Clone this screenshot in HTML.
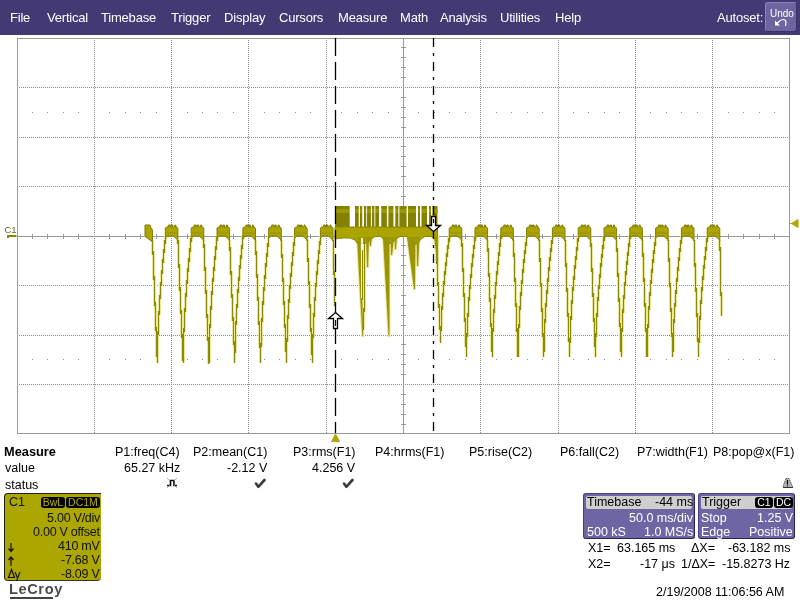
<!DOCTYPE html>
<html><head><meta charset="utf-8">
<style>
*{margin:0;padding:0;box-sizing:border-box}
html,body{width:800px;height:600px;overflow:hidden;background:#fff;font-family:"Liberation Sans",sans-serif;position:relative}
.t,#menu span,#undo div,.badge{will-change:transform}
.a{position:absolute;white-space:nowrap}
#menu{position:absolute;left:0;top:0;width:800px;height:35px;background:#433a74}
#menu span{position:absolute;top:10px;color:#fff;font-size:13px;line-height:15px;letter-spacing:-0.2px}
#undo{position:absolute;left:765px;top:2px;width:32px;height:30px;background:#6e65a0;border-radius:3px;color:#fff;border-top:1px solid #8a80c0;border-left:1px solid #8a80c0;border-right:1px solid #3a3068;border-bottom:1px solid #3a3068}
.t{position:absolute;white-space:nowrap;font-size:12px;line-height:14px;color:#000}
.r{text-align:right}
.ms{font-size:12.5px}
#c1{position:absolute;left:4px;top:493px;width:97px;height:88px;background:#aca600;border-top:1px solid #222;border-left:1px solid #222;border-bottom:1px solid #333;border-radius:4px 0 4px 4px}
.c1t{font-size:12.5px;color:#111 !important;letter-spacing:-0.25px}
.panel{position:absolute;top:493px;height:46px;background:#6e66a4;border:1px solid #463e80;border-right-color:#2a2258;border-bottom-color:#2a2258;border-radius:3px}
.hdr{position:absolute;left:2px;top:2px;height:13px;background:#cfcfcf;border-radius:2px}
.panel .t{color:#fff;font-size:12.5px}
.badge{position:absolute;background:#000;border-radius:3px;font-size:10.5px;line-height:11.5px;text-align:center;overflow:hidden}
</style></head><body>
<div id="menu">
<span style="left:10px">File</span>
<span style="left:47px">Vertical</span>
<span style="left:101px">Timebase</span>
<span style="left:171px">Trigger</span>
<span style="left:224px">Display</span>
<span style="left:279px">Cursors</span>
<span style="left:338px">Measure</span>
<span style="left:400px">Math</span>
<span style="left:440px">Analysis</span>
<span style="left:500px">Utilities</span>
<span style="left:555px">Help</span>
<span style="left:717px">Autoset:</span>
<div id="undo"><div style="position:absolute;left:4px;top:5px;font-size:10px;line-height:11px">Undo</div>
<svg style="position:absolute;left:-1px;top:-1px" width="32" height="30" viewBox="765 2 32 30"><path d="M775,20.5 L775,25.5 L780,25.5 Z" fill="#fff"/><path d="M776,24.5 L778.5,22 Q781,19.5 783,19.5 Q786,19.5 786,22.5 L785.5,26" stroke="#fff" stroke-width="1.2" fill="none"/></svg></div>
</div>
<svg class="a" style="left:0;top:0" width="800" height="600" viewBox="0 0 800 600" shape-rendering="crispEdges">
<path d="M94.5,40V433M171.5,40V433M248.5,40V433M326.5,40V433M480.5,40V433M558.5,40V433M635.5,40V433M712.5,40V433M19,87.5H789M19,137.5H789M19,186.5H789M19,285.5H789M19,335.5H789M19,384.5H789" stroke="#8c8c8c" stroke-width="1" stroke-dasharray="1 1" fill="none"/>
<path d="M32,112h1v1h-1zM47,112h1v1h-1zM63,112h1v1h-1zM78,112h1v1h-1zM109,112h1v1h-1zM125,112h1v1h-1zM140,112h1v1h-1zM156,112h1v1h-1zM187,112h1v1h-1zM202,112h1v1h-1zM217,112h1v1h-1zM233,112h1v1h-1zM264,112h1v1h-1zM279,112h1v1h-1zM295,112h1v1h-1zM310,112h1v1h-1zM341,112h1v1h-1zM357,112h1v1h-1zM372,112h1v1h-1zM388,112h1v1h-1zM418,112h1v1h-1zM434,112h1v1h-1zM449,112h1v1h-1zM465,112h1v1h-1zM496,112h1v1h-1zM511,112h1v1h-1zM527,112h1v1h-1zM542,112h1v1h-1zM573,112h1v1h-1zM588,112h1v1h-1zM604,112h1v1h-1zM619,112h1v1h-1zM650,112h1v1h-1zM666,112h1v1h-1zM681,112h1v1h-1zM697,112h1v1h-1zM728,112h1v1h-1zM743,112h1v1h-1zM759,112h1v1h-1zM774,112h1v1h-1zM32,359h1v1h-1zM47,359h1v1h-1zM63,359h1v1h-1zM78,359h1v1h-1zM109,359h1v1h-1zM125,359h1v1h-1zM140,359h1v1h-1zM156,359h1v1h-1zM187,359h1v1h-1zM202,359h1v1h-1zM217,359h1v1h-1zM233,359h1v1h-1zM264,359h1v1h-1zM279,359h1v1h-1zM295,359h1v1h-1zM310,359h1v1h-1zM341,359h1v1h-1zM357,359h1v1h-1zM372,359h1v1h-1zM388,359h1v1h-1zM418,359h1v1h-1zM434,359h1v1h-1zM449,359h1v1h-1zM465,359h1v1h-1zM496,359h1v1h-1zM511,359h1v1h-1zM527,359h1v1h-1zM542,359h1v1h-1zM573,359h1v1h-1zM588,359h1v1h-1zM604,359h1v1h-1zM619,359h1v1h-1zM650,359h1v1h-1zM666,359h1v1h-1zM681,359h1v1h-1zM697,359h1v1h-1zM728,359h1v1h-1zM743,359h1v1h-1zM759,359h1v1h-1zM774,359h1v1h-1z" fill="#8c8c8c"/>
<rect x="17.5" y="38.5" width="772" height="395" fill="none" stroke="#999"/>
<rect x="17" y="236" width="772" height="1" fill="#999"/>
<rect x="403" y="38" width="1" height="395" fill="#999"/>
<path d="M32,234h1v5h-1zM47,234h1v5h-1zM63,234h1v5h-1zM78,234h1v5h-1zM109,234h1v5h-1zM125,234h1v5h-1zM140,234h1v5h-1zM156,234h1v5h-1zM187,234h1v5h-1zM202,234h1v5h-1zM217,234h1v5h-1zM233,234h1v5h-1zM264,234h1v5h-1zM279,234h1v5h-1zM295,234h1v5h-1zM310,234h1v5h-1zM341,234h1v5h-1zM357,234h1v5h-1zM372,234h1v5h-1zM388,234h1v5h-1zM418,234h1v5h-1zM434,234h1v5h-1zM449,234h1v5h-1zM465,234h1v5h-1zM496,234h1v5h-1zM511,234h1v5h-1zM527,234h1v5h-1zM542,234h1v5h-1zM573,234h1v5h-1zM588,234h1v5h-1zM604,234h1v5h-1zM619,234h1v5h-1zM650,234h1v5h-1zM666,234h1v5h-1zM681,234h1v5h-1zM697,234h1v5h-1zM728,234h1v5h-1zM743,234h1v5h-1zM759,234h1v5h-1zM774,234h1v5h-1zM401,47h5v1h-5zM401,57h5v1h-5zM401,67h5v1h-5zM401,77h5v1h-5zM401,97h5v1h-5zM401,107h5v1h-5zM401,117h5v1h-5zM401,127h5v1h-5zM401,146h5v1h-5zM401,156h5v1h-5zM401,166h5v1h-5zM401,176h5v1h-5zM401,196h5v1h-5zM401,206h5v1h-5zM401,216h5v1h-5zM401,226h5v1h-5zM401,245h5v1h-5zM401,255h5v1h-5zM401,265h5v1h-5zM401,275h5v1h-5zM401,295h5v1h-5zM401,305h5v1h-5zM401,315h5v1h-5zM401,325h5v1h-5zM401,344h5v1h-5zM401,354h5v1h-5zM401,364h5v1h-5zM401,374h5v1h-5zM401,394h5v1h-5zM401,404h5v1h-5zM401,414h5v1h-5zM401,424h5v1h-5z" fill="#999"/>
</svg>
<svg class="a" style="left:0;top:0" width="800" height="600" viewBox="0 0 800 600">
<path d="M151,240h3v15h-3zM152,251h3v29h-3zM153,276h3v30h-3zM154,302h3v29h-3zM155,327h3v30h-3zM156,353h3v10h-3zM156,349h3v14h-3zM156,337h3v13h-3zM157,324h3v11h-3zM156,331h3v7h-3zM158,311h3v4h-3zM157,311h3v14h-3zM158,299h3v13h-3zM159,286h3v13h-3zM158,295h3v5h-3zM160,273h3v13h-3zM159,282h3v5h-3zM161,261h3v13h-3zM160,270h3v4h-3zM163,248h3v5h-3zM162,249h3v14h-3zM161,259h3v3h-3zM164,236h3v8h-3zM163,240h3v9h-3z" fill="#ebe79a"/>
<path d="M176,240h3v4h-3zM177,240h3v28h-3zM178,264h3v27h-3zM179,287h3v27h-3zM180,310h3v28h-3zM181,334h3v27h-3zM182,357h3v6h-3zM182,349h3v14h-3zM182,337h3v13h-3zM183,324h3v8h-3zM182,328h3v10h-3zM183,311h3v14h-3zM184,299h3v13h-3zM183,308h3v4h-3zM185,286h3v11h-3zM184,293h3v7h-3zM186,273h3v11h-3zM185,280h3v7h-3zM187,261h3v11h-3zM186,268h3v6h-3zM189,248h3v4h-3zM188,248h3v14h-3zM187,258h3v4h-3zM190,236h3v6h-3zM189,238h3v11h-3z" fill="#ebe79a"/>
<path d="M202,240h3v8h-3zM203,244h3v27h-3zM204,267h3v27h-3zM205,290h3v28h-3zM206,314h3v27h-3zM207,337h3v27h-3zM208,360h3v3h-3zM208,349h3v14h-3zM208,337h3v13h-3zM209,324h3v4h-3zM208,324h3v14h-3zM209,311h3v14h-3zM210,299h3v11h-3zM209,306h3v6h-3zM211,286h3v9h-3zM210,291h3v9h-3zM212,273h3v9h-3zM211,278h3v9h-3zM213,261h3v10h-3zM212,267h3v7h-3zM214,248h3v12h-3zM213,256h3v6h-3zM216,236h3v5h-3zM215,237h3v13h-3zM214,246h3v3h-3z" fill="#ebe79a"/>
<path d="M228,240h3v11h-3zM229,247h3v28h-3zM230,271h3v27h-3zM231,294h3v27h-3zM232,317h3v28h-3zM233,341h3v22h-3zM234,349h3v4h-3zM233,349h3v14h-3zM234,337h3v13h-3zM234,324h3v14h-3zM235,311h3v14h-3zM234,321h3v4h-3zM236,299h3v9h-3zM235,304h3v8h-3zM237,286h3v7h-3zM236,289h3v11h-3zM238,273h3v8h-3zM237,277h3v10h-3zM239,261h3v8h-3zM238,265h3v9h-3zM240,248h3v11h-3zM239,255h3v7h-3zM242,236h3v3h-3zM241,235h3v14h-3zM240,245h3v4h-3z" fill="#ebe79a"/>
<path d="M254,240h3v15h-3zM255,251h3v27h-3zM256,274h3v27h-3zM257,297h3v28h-3zM258,321h3v27h-3zM259,344h3v19h-3zM259,349h3v14h-3zM260,337h3v10h-3zM259,343h3v7h-3zM260,324h3v14h-3zM261,311h3v11h-3zM260,318h3v7h-3zM262,299h3v6h-3zM261,301h3v11h-3zM263,286h3v5h-3zM262,287h3v13h-3zM264,273h3v6h-3zM263,275h3v12h-3zM265,261h3v6h-3zM264,263h3v11h-3zM266,248h3v9h-3zM265,253h3v9h-3zM267,236h3v11h-3zM266,243h3v6h-3z" fill="#ebe79a"/>
<path d="M280,240h3v18h-3zM281,254h3v28h-3zM282,278h3v27h-3zM283,301h3v27h-3zM284,324h3v28h-3zM285,348h3v15h-3zM285,349h3v14h-3zM286,337h3v5h-3zM285,338h3v12h-3zM286,324h3v14h-3zM287,311h3v8h-3zM286,315h3v10h-3zM288,299h3v4h-3zM287,299h3v13h-3zM289,286h3v3h-3zM288,285h3v15h-3zM290,273h3v4h-3zM289,273h3v14h-3zM291,261h3v5h-3zM290,262h3v12h-3zM292,248h3v8h-3zM291,252h3v10h-3zM293,236h3v10h-3zM292,242h3v7h-3z" fill="#ebe79a"/>
<path d="M306,240h3v22h-3zM307,258h3v27h-3zM308,281h3v27h-3zM309,304h3v28h-3zM310,328h3v27h-3zM311,351h3v12h-3zM311,349h3v14h-3zM311,337h3v13h-3zM312,324h3v14h-3zM311,334h3v4h-3zM313,311h3v6h-3zM312,313h3v12h-3zM313,299h3v13h-3zM314,286h3v15h-3zM313,297h3v3h-3zM315,273h3v14h-3zM314,283h3v4h-3zM317,261h3v3h-3zM316,260h3v15h-3zM315,271h3v3h-3zM318,248h3v6h-3zM317,250h3v12h-3zM319,236h3v9h-3zM318,241h3v8h-3z" fill="#ebe79a"/>
<path d="M332,240h3v35h-3zM333,271h3v35h-3z" fill="#ebe79a"/>
<path d="M435,240h3v24h-3zM436,260h3v26h-3zM437,282h3v26h-3zM438,304h3v26h-3zM439,326h3v17h-3zM439,332h3v11h-3zM440,321h3v10h-3zM439,327h3v6h-3zM440,310h3v12h-3zM441,300h3v10h-3zM440,306h3v5h-3zM442,289h3v8h-3zM441,293h3v8h-3zM443,278h3v7h-3zM442,281h3v9h-3zM444,268h3v7h-3zM443,271h3v8h-3zM445,257h3v9h-3zM444,262h3v7h-3zM447,246h3v3h-3zM446,245h3v12h-3zM445,253h3v5h-3zM448,236h3v6h-3zM447,238h3v9h-3z" fill="#ebe79a"/>
<path d="M460,240h3v7h-3zM461,243h3v29h-3zM462,268h3v29h-3zM463,293h3v29h-3zM464,318h3v29h-3zM465,343h3v14h-3zM465,344h3v13h-3zM466,332h3v5h-3zM465,333h3v12h-3zM466,320h3v13h-3zM467,308h3v9h-3zM466,313h3v8h-3zM468,296h3v5h-3zM467,297h3v12h-3zM469,284h3v5h-3zM468,285h3v12h-3zM470,272h3v6h-3zM469,274h3v11h-3zM471,260h3v7h-3zM470,263h3v10h-3zM472,248h3v10h-3zM471,254h3v7h-3zM474,236h3v5h-3zM473,237h3v12h-3zM472,245h3v4h-3z" fill="#ebe79a"/>
<path d="M486,240h3v12h-3zM487,248h3v29h-3zM488,273h3v29h-3zM489,298h3v29h-3zM490,323h3v29h-3zM491,348h3v9h-3zM491,344h3v13h-3zM491,332h3v13h-3zM492,320h3v12h-3zM491,328h3v5h-3zM493,308h3v5h-3zM492,309h3v12h-3zM494,296h3v3h-3zM493,295h3v14h-3zM494,284h3v13h-3zM496,272h3v3h-3zM495,271h3v15h-3zM494,282h3v3h-3zM497,260h3v5h-3zM496,261h3v12h-3zM498,248h3v8h-3zM497,252h3v9h-3zM500,236h3v3h-3zM499,235h3v12h-3zM498,243h3v6h-3z" fill="#ebe79a"/>
<path d="M512,240h3v17h-3zM513,253h3v29h-3zM514,278h3v29h-3zM515,303h3v29h-3zM516,328h3v29h-3zM517,353h3v4h-3zM517,344h3v13h-3zM517,332h3v13h-3zM518,320h3v8h-3zM517,324h3v9h-3zM518,308h3v13h-3zM519,296h3v14h-3zM518,306h3v3h-3zM520,284h3v12h-3zM519,292h3v5h-3zM521,272h3v12h-3zM520,280h3v5h-3zM523,260h3v3h-3zM522,259h3v14h-3zM521,269h3v4h-3zM524,248h3v6h-3zM523,250h3v11h-3zM525,236h3v10h-3zM524,242h3v7h-3z" fill="#ebe79a"/>
<path d="M538,240h3v22h-3zM539,258h3v29h-3zM540,283h3v29h-3zM541,308h3v29h-3zM542,333h3v24h-3zM543,344h3v8h-3zM542,348h3v9h-3zM543,332h3v13h-3zM544,320h3v3h-3zM543,319h3v14h-3zM544,308h3v13h-3zM545,296h3v11h-3zM544,303h3v6h-3zM546,284h3v10h-3zM545,290h3v7h-3zM547,272h3v10h-3zM546,278h3v7h-3zM548,260h3v11h-3zM547,267h3v6h-3zM550,248h3v4h-3zM549,248h3v13h-3zM548,257h3v4h-3zM551,236h3v8h-3zM550,240h3v9h-3z" fill="#ebe79a"/>
<path d="M564,240h3v27h-3zM565,263h3v29h-3zM566,288h3v29h-3zM567,313h3v29h-3zM568,338h3v19h-3zM568,344h3v13h-3zM569,332h3v11h-3zM568,339h3v6h-3zM569,320h3v13h-3zM570,308h3v12h-3zM569,316h3v5h-3zM571,296h3v8h-3zM570,300h3v9h-3zM572,284h3v7h-3zM571,287h3v10h-3zM573,272h3v8h-3zM572,276h3v9h-3zM574,260h3v9h-3zM573,265h3v8h-3zM576,248h3v3h-3zM575,247h3v13h-3zM574,256h3v5h-3zM577,236h3v6h-3zM576,238h3v11h-3z" fill="#ebe79a"/>
<path d="M589,240h3v7h-3zM590,243h3v29h-3zM591,268h3v29h-3zM592,293h3v29h-3zM593,318h3v29h-3zM594,343h3v14h-3zM594,344h3v13h-3zM595,332h3v5h-3zM594,333h3v12h-3zM595,320h3v13h-3zM596,308h3v9h-3zM595,313h3v8h-3zM597,296h3v5h-3zM596,297h3v12h-3zM598,284h3v5h-3zM597,285h3v12h-3zM599,272h3v6h-3zM598,274h3v11h-3zM600,260h3v7h-3zM599,263h3v10h-3zM601,248h3v10h-3zM600,254h3v7h-3zM603,236h3v5h-3zM602,237h3v12h-3zM601,245h3v4h-3z" fill="#ebe79a"/>
<path d="M615,240h3v12h-3zM616,248h3v29h-3zM617,273h3v29h-3zM618,298h3v29h-3zM619,323h3v29h-3zM620,348h3v9h-3zM620,344h3v13h-3zM620,332h3v13h-3zM621,320h3v12h-3zM620,328h3v5h-3zM622,308h3v5h-3zM621,309h3v12h-3zM623,296h3v3h-3zM622,295h3v14h-3zM623,284h3v13h-3zM625,272h3v3h-3zM624,271h3v15h-3zM623,282h3v3h-3zM626,260h3v5h-3zM625,261h3v12h-3zM627,248h3v8h-3zM626,252h3v9h-3zM629,236h3v3h-3zM628,235h3v12h-3zM627,243h3v6h-3z" fill="#ebe79a"/>
<path d="M641,240h3v17h-3zM642,253h3v29h-3zM643,278h3v29h-3zM644,303h3v29h-3zM645,328h3v29h-3zM646,353h3v4h-3zM646,344h3v13h-3zM646,332h3v13h-3zM647,320h3v8h-3zM646,324h3v9h-3zM647,308h3v13h-3zM648,296h3v14h-3zM647,306h3v3h-3zM649,284h3v12h-3zM648,292h3v5h-3zM650,272h3v12h-3zM649,280h3v5h-3zM652,260h3v3h-3zM651,259h3v14h-3zM650,269h3v4h-3zM653,248h3v6h-3zM652,250h3v11h-3zM654,236h3v10h-3zM653,242h3v7h-3z" fill="#ebe79a"/>
<path d="M667,240h3v22h-3zM668,258h3v29h-3zM669,283h3v29h-3zM670,308h3v29h-3zM671,333h3v24h-3zM672,344h3v8h-3zM671,348h3v9h-3zM672,332h3v13h-3zM673,320h3v3h-3zM672,319h3v14h-3zM673,308h3v13h-3zM674,296h3v11h-3zM673,303h3v6h-3zM675,284h3v10h-3zM674,290h3v7h-3zM676,272h3v10h-3zM675,278h3v7h-3zM677,260h3v11h-3zM676,267h3v6h-3zM679,248h3v4h-3zM678,248h3v13h-3zM677,257h3v4h-3zM680,236h3v8h-3zM679,240h3v9h-3z" fill="#ebe79a"/>
<path d="M693,240h3v27h-3zM694,263h3v29h-3zM695,288h3v29h-3zM696,313h3v29h-3zM697,338h3v19h-3zM697,344h3v13h-3zM698,332h3v11h-3zM697,339h3v6h-3zM698,320h3v13h-3zM699,308h3v12h-3zM698,316h3v5h-3zM700,296h3v8h-3zM699,300h3v9h-3zM701,284h3v7h-3zM700,287h3v10h-3zM702,272h3v8h-3zM701,276h3v9h-3zM703,260h3v9h-3zM702,265h3v8h-3zM705,248h3v3h-3zM704,247h3v13h-3zM703,256h3v5h-3zM706,236h3v6h-3zM705,238h3v11h-3z" fill="#ebe79a"/>
<path d="M718,240h3v11h-3zM719,247h3v49h-3zM720,292h3v24h-3z" fill="#ebe79a"/>
<polygon points="357.0,237.0 360.5,237.0 363.3,336.0 362.3,336.0" fill="#ebe79a" stroke="#ebe79a" stroke-width="2"/>
<path d="M363,237h3v63h-3zM363,300h3v12h-3zM362,308h3v22h-3z" fill="#ebe79a"/>
<polygon points="366.0,237.0 369.0,237.0 368.1,267.0 367.1,267.0" fill="#ebe79a" stroke="#ebe79a" stroke-width="2"/>
<polygon points="369.0,237.0 372.0,237.0 370.9,246.0 369.9,246.0" fill="#ebe79a" stroke="#ebe79a" stroke-width="2"/>
<path d="M361,250h3v50h-3z" fill="#ebe79a"/>
<polygon points="383.0,237.0 389.4,237.0 389.5,336.0 388.5,336.0" fill="#ebe79a" stroke="#ebe79a" stroke-width="2"/>
<polygon points="390.4,237.0 394.0,237.0 392.1,255.0 391.1,255.0" fill="#ebe79a" stroke="#ebe79a" stroke-width="2"/>
<polygon points="394.5,237.0 397.0,237.0 396.0,249.0 395.0,249.0" fill="#ebe79a" stroke="#ebe79a" stroke-width="2"/>
<polygon points="407.0,237.0 415.5,237.0 415.0,289.0 414.0,289.0" fill="#ebe79a" stroke="#ebe79a" stroke-width="2"/>
<polygon points="416.5,237.0 419.5,237.0 418.1,266.0 417.1,266.0" fill="#ebe79a" stroke="#ebe79a" stroke-width="2"/>
<polygon points="434.0,237.0 438.0,237.0 438.1,262.0 437.1,262.0" fill="#ebe79a" stroke="#ebe79a" stroke-width="2"/>
<polygon points="145.0,236.0 145.0,225.0 150.0,225.0 151.0,228.0 152.5,230.0 152.5,242.0 150.0,240.0 147.0,238.0" fill="#aca500" stroke="#827e00" stroke-width="1"/>
<polygon points="165.3,237.0 165.3,228.0 166.8,227.0 168.3,227.0 168.3,225.0 170.3,225.0 170.3,227.0 171.3,227.0 171.3,225.0 172.8,225.0 172.8,227.0 174.8,227.0 174.8,225.0 175.8,225.0 175.8,227.0 176.9,227.0 177.9,228.5 177.9,241.0 176.9,239.0 174.9,237.5 173.3,236.0 167.3,236.0 166.3,237.5" fill="#aca500" stroke="#827e00" stroke-width="1"/>
<rect x="166.3" y="232.5" width="10.6" height="1.2" fill="#9a9400"/>
<path d="M152,240h1v15h-1zM153,251h1v29h-1zM154,276h1v30h-1zM155,302h1v29h-1zM156,327h1v30h-1zM157,353h1v10h-1zM157,349h1v14h-1zM157,337h1v13h-1zM158,324h1v11h-1zM157,331h1v7h-1zM159,311h1v4h-1zM158,311h1v14h-1zM159,299h1v13h-1zM160,286h1v13h-1zM159,295h1v5h-1zM161,273h1v13h-1zM160,282h1v5h-1zM162,261h1v13h-1zM161,270h1v4h-1zM164,248h1v5h-1zM163,249h1v14h-1zM162,259h1v3h-1zM165,236h1v8h-1zM164,240h1v9h-1z" fill="#8e8a00" shape-rendering="crispEdges"/>
<polygon points="191.2,237.0 191.2,228.0 192.7,227.0 194.2,227.0 194.2,225.0 196.2,225.0 196.2,227.0 197.2,227.0 197.2,225.0 198.7,225.0 198.7,227.0 200.7,227.0 200.7,225.0 201.7,225.0 201.7,227.0 202.8,227.0 203.8,228.5 203.8,241.0 202.8,239.0 200.8,237.5 199.2,236.0 193.2,236.0 192.2,237.5" fill="#aca500" stroke="#827e00" stroke-width="1"/>
<rect x="192.15" y="232.5" width="10.6" height="1.2" fill="#9a9400"/>
<path d="M177,240h1v4h-1zM178,240h1v28h-1zM179,264h1v27h-1zM180,287h1v27h-1zM181,310h1v28h-1zM182,334h1v27h-1zM183,357h1v6h-1zM183,349h1v14h-1zM183,337h1v13h-1zM184,324h1v8h-1zM183,328h1v10h-1zM184,311h1v14h-1zM185,299h1v13h-1zM184,308h1v4h-1zM186,286h1v11h-1zM185,293h1v7h-1zM187,273h1v11h-1zM186,280h1v7h-1zM188,261h1v11h-1zM187,268h1v6h-1zM190,248h1v4h-1zM189,248h1v14h-1zM188,258h1v4h-1zM191,236h1v6h-1zM190,238h1v11h-1z" fill="#8e8a00" shape-rendering="crispEdges"/>
<polygon points="217.0,237.0 217.0,228.0 218.5,227.0 220.0,227.0 220.0,225.0 222.0,225.0 222.0,227.0 223.0,227.0 223.0,225.0 224.5,225.0 224.5,227.0 226.5,227.0 226.5,225.0 227.5,225.0 227.5,227.0 228.6,227.0 229.6,228.5 229.6,241.0 228.6,239.0 226.6,237.5 225.0,236.0 219.0,236.0 218.0,237.5" fill="#aca500" stroke="#827e00" stroke-width="1"/>
<rect x="218.0" y="232.5" width="10.6" height="1.2" fill="#9a9400"/>
<path d="M203,240h1v8h-1zM204,244h1v27h-1zM205,267h1v27h-1zM206,290h1v28h-1zM207,314h1v27h-1zM208,337h1v27h-1zM209,360h1v3h-1zM209,349h1v14h-1zM209,337h1v13h-1zM210,324h1v4h-1zM209,324h1v14h-1zM210,311h1v14h-1zM211,299h1v11h-1zM210,306h1v6h-1zM212,286h1v9h-1zM211,291h1v9h-1zM213,273h1v9h-1zM212,278h1v9h-1zM214,261h1v10h-1zM213,267h1v7h-1zM215,248h1v12h-1zM214,256h1v6h-1zM217,236h1v5h-1zM216,237h1v13h-1zM215,246h1v3h-1z" fill="#8e8a00" shape-rendering="crispEdges"/>
<polygon points="242.9,237.0 242.9,228.0 244.4,227.0 245.9,227.0 245.9,225.0 247.9,225.0 247.9,227.0 248.9,227.0 248.9,225.0 250.4,225.0 250.4,227.0 252.4,227.0 252.4,225.0 253.4,225.0 253.4,227.0 254.5,227.0 255.5,228.5 255.5,241.0 254.5,239.0 252.5,237.5 250.9,236.0 244.9,236.0 243.9,237.5" fill="#aca500" stroke="#827e00" stroke-width="1"/>
<rect x="243.85000000000002" y="232.5" width="10.6" height="1.2" fill="#9a9400"/>
<path d="M229,240h1v11h-1zM230,247h1v28h-1zM231,271h1v27h-1zM232,294h1v27h-1zM233,317h1v28h-1zM234,341h1v22h-1zM235,349h1v4h-1zM234,349h1v14h-1zM235,337h1v13h-1zM235,324h1v14h-1zM236,311h1v14h-1zM235,321h1v4h-1zM237,299h1v9h-1zM236,304h1v8h-1zM238,286h1v7h-1zM237,289h1v11h-1zM239,273h1v8h-1zM238,277h1v10h-1zM240,261h1v8h-1zM239,265h1v9h-1zM241,248h1v11h-1zM240,255h1v7h-1zM243,236h1v3h-1zM242,235h1v14h-1zM241,245h1v4h-1z" fill="#8e8a00" shape-rendering="crispEdges"/>
<polygon points="268.7,237.0 268.7,228.0 270.2,227.0 271.7,227.0 271.7,225.0 273.7,225.0 273.7,227.0 274.7,227.0 274.7,225.0 276.2,225.0 276.2,227.0 278.2,227.0 278.2,225.0 279.2,225.0 279.2,227.0 280.3,227.0 281.3,228.5 281.3,241.0 280.3,239.0 278.3,237.5 276.7,236.0 270.7,236.0 269.7,237.5" fill="#aca500" stroke="#827e00" stroke-width="1"/>
<rect x="269.70000000000005" y="232.5" width="10.6" height="1.2" fill="#9a9400"/>
<path d="M255,240h1v15h-1zM256,251h1v27h-1zM257,274h1v27h-1zM258,297h1v28h-1zM259,321h1v27h-1zM260,344h1v19h-1zM260,349h1v14h-1zM261,337h1v10h-1zM260,343h1v7h-1zM261,324h1v14h-1zM262,311h1v11h-1zM261,318h1v7h-1zM263,299h1v6h-1zM262,301h1v11h-1zM264,286h1v5h-1zM263,287h1v13h-1zM265,273h1v6h-1zM264,275h1v12h-1zM266,261h1v6h-1zM265,263h1v11h-1zM267,248h1v9h-1zM266,253h1v9h-1zM268,236h1v11h-1zM267,243h1v6h-1z" fill="#8e8a00" shape-rendering="crispEdges"/>
<polygon points="294.6,237.0 294.6,228.0 296.1,227.0 297.6,227.0 297.6,225.0 299.6,225.0 299.6,227.0 300.6,227.0 300.6,225.0 302.1,225.0 302.1,227.0 304.1,227.0 304.1,225.0 305.1,225.0 305.1,227.0 306.2,227.0 307.2,228.5 307.2,241.0 306.2,239.0 304.2,237.5 302.6,236.0 296.6,236.0 295.6,237.5" fill="#aca500" stroke="#827e00" stroke-width="1"/>
<rect x="295.55" y="232.5" width="10.6" height="1.2" fill="#9a9400"/>
<path d="M281,240h1v18h-1zM282,254h1v28h-1zM283,278h1v27h-1zM284,301h1v27h-1zM285,324h1v28h-1zM286,348h1v15h-1zM286,349h1v14h-1zM287,337h1v5h-1zM286,338h1v12h-1zM287,324h1v14h-1zM288,311h1v8h-1zM287,315h1v10h-1zM289,299h1v4h-1zM288,299h1v13h-1zM290,286h1v3h-1zM289,285h1v15h-1zM291,273h1v4h-1zM290,273h1v14h-1zM292,261h1v5h-1zM291,262h1v12h-1zM293,248h1v8h-1zM292,252h1v10h-1zM294,236h1v10h-1zM293,242h1v7h-1z" fill="#8e8a00" shape-rendering="crispEdges"/>
<polygon points="320.4,237.0 320.4,228.0 321.9,227.0 323.4,227.0 323.4,225.0 325.4,225.0 325.4,227.0 326.4,227.0 326.4,225.0 327.9,225.0 327.9,227.0 329.9,227.0 329.9,225.0 330.9,225.0 330.9,227.0 332.0,227.0 333.0,228.5 333.0,241.0 332.0,239.0 330.0,237.5 328.4,236.0 322.4,236.0 321.4,237.5" fill="#aca500" stroke="#827e00" stroke-width="1"/>
<rect x="321.40000000000003" y="232.5" width="10.6" height="1.2" fill="#9a9400"/>
<path d="M307,240h1v22h-1zM308,258h1v27h-1zM309,281h1v27h-1zM310,304h1v28h-1zM311,328h1v27h-1zM312,351h1v12h-1zM312,349h1v14h-1zM312,337h1v13h-1zM313,324h1v14h-1zM312,334h1v4h-1zM314,311h1v6h-1zM313,313h1v12h-1zM314,299h1v13h-1zM315,286h1v15h-1zM314,297h1v3h-1zM316,273h1v14h-1zM315,283h1v4h-1zM318,261h1v3h-1zM317,260h1v15h-1zM316,271h1v3h-1zM319,248h1v6h-1zM318,250h1v12h-1zM320,236h1v9h-1zM319,241h1v8h-1z" fill="#8e8a00" shape-rendering="crispEdges"/>
<path d="M333,240h1v35h-1zM334,271h1v35h-1z" fill="#8e8a00" shape-rendering="crispEdges"/>
<polygon points="449.2,237.0 449.2,228.0 450.7,227.0 452.2,227.0 452.2,225.0 454.2,225.0 454.2,227.0 455.2,227.0 455.2,225.0 456.7,225.0 456.7,227.0 458.7,227.0 458.7,225.0 459.7,225.0 459.7,227.0 460.8,227.0 461.8,228.5 461.8,241.0 460.8,239.0 458.8,237.5 457.2,236.0 451.2,236.0 450.2,237.5" fill="#aca500" stroke="#827e00" stroke-width="1"/>
<rect x="450.2" y="232.5" width="10.6" height="1.2" fill="#9a9400"/>
<path d="M436,240h1v24h-1zM437,260h1v26h-1zM438,282h1v26h-1zM439,304h1v26h-1zM440,326h1v17h-1zM440,332h1v11h-1zM441,321h1v10h-1zM440,327h1v6h-1zM441,310h1v12h-1zM442,300h1v10h-1zM441,306h1v5h-1zM443,289h1v8h-1zM442,293h1v8h-1zM444,278h1v7h-1zM443,281h1v9h-1zM445,268h1v7h-1zM444,271h1v8h-1zM446,257h1v9h-1zM445,262h1v7h-1zM448,246h1v3h-1zM447,245h1v12h-1zM446,253h1v5h-1zM449,236h1v6h-1zM448,238h1v9h-1z" fill="#8e8a00" shape-rendering="crispEdges"/>
<polygon points="475.0,237.0 475.0,228.0 476.5,227.0 478.0,227.0 478.0,225.0 480.0,225.0 480.0,227.0 481.0,227.0 481.0,225.0 482.5,225.0 482.5,227.0 484.5,227.0 484.5,225.0 485.5,225.0 485.5,227.0 486.6,227.0 487.6,228.5 487.6,241.0 486.6,239.0 484.6,237.5 483.0,236.0 477.0,236.0 476.0,237.5" fill="#aca500" stroke="#827e00" stroke-width="1"/>
<rect x="476.0" y="232.5" width="10.6" height="1.2" fill="#9a9400"/>
<path d="M461,240h1v7h-1zM462,243h1v29h-1zM463,268h1v29h-1zM464,293h1v29h-1zM465,318h1v29h-1zM466,343h1v14h-1zM466,344h1v13h-1zM467,332h1v5h-1zM466,333h1v12h-1zM467,320h1v13h-1zM468,308h1v9h-1zM467,313h1v8h-1zM469,296h1v5h-1zM468,297h1v12h-1zM470,284h1v5h-1zM469,285h1v12h-1zM471,272h1v6h-1zM470,274h1v11h-1zM472,260h1v7h-1zM471,263h1v10h-1zM473,248h1v10h-1zM472,254h1v7h-1zM475,236h1v5h-1zM474,237h1v12h-1zM473,245h1v4h-1z" fill="#8e8a00" shape-rendering="crispEdges"/>
<polygon points="500.8,237.0 500.8,228.0 502.3,227.0 503.8,227.0 503.8,225.0 505.8,225.0 505.8,227.0 506.8,227.0 506.8,225.0 508.3,225.0 508.3,227.0 510.3,227.0 510.3,225.0 511.3,225.0 511.3,227.0 512.4,227.0 513.4,228.5 513.4,241.0 512.4,239.0 510.4,237.5 508.8,236.0 502.8,236.0 501.8,237.5" fill="#aca500" stroke="#827e00" stroke-width="1"/>
<rect x="501.8" y="232.5" width="10.6" height="1.2" fill="#9a9400"/>
<path d="M487,240h1v12h-1zM488,248h1v29h-1zM489,273h1v29h-1zM490,298h1v29h-1zM491,323h1v29h-1zM492,348h1v9h-1zM492,344h1v13h-1zM492,332h1v13h-1zM493,320h1v12h-1zM492,328h1v5h-1zM494,308h1v5h-1zM493,309h1v12h-1zM495,296h1v3h-1zM494,295h1v14h-1zM495,284h1v13h-1zM497,272h1v3h-1zM496,271h1v15h-1zM495,282h1v3h-1zM498,260h1v5h-1zM497,261h1v12h-1zM499,248h1v8h-1zM498,252h1v9h-1zM501,236h1v3h-1zM500,235h1v12h-1zM499,243h1v6h-1z" fill="#8e8a00" shape-rendering="crispEdges"/>
<polygon points="526.6,237.0 526.6,228.0 528.1,227.0 529.6,227.0 529.6,225.0 531.6,225.0 531.6,227.0 532.6,227.0 532.6,225.0 534.1,225.0 534.1,227.0 536.1,227.0 536.1,225.0 537.1,225.0 537.1,227.0 538.2,227.0 539.2,228.5 539.2,241.0 538.2,239.0 536.2,237.5 534.6,236.0 528.6,236.0 527.6,237.5" fill="#aca500" stroke="#827e00" stroke-width="1"/>
<rect x="527.6" y="232.5" width="10.6" height="1.2" fill="#9a9400"/>
<path d="M513,240h1v17h-1zM514,253h1v29h-1zM515,278h1v29h-1zM516,303h1v29h-1zM517,328h1v29h-1zM518,353h1v4h-1zM518,344h1v13h-1zM518,332h1v13h-1zM519,320h1v8h-1zM518,324h1v9h-1zM519,308h1v13h-1zM520,296h1v14h-1zM519,306h1v3h-1zM521,284h1v12h-1zM520,292h1v5h-1zM522,272h1v12h-1zM521,280h1v5h-1zM524,260h1v3h-1zM523,259h1v14h-1zM522,269h1v4h-1zM525,248h1v6h-1zM524,250h1v11h-1zM526,236h1v10h-1zM525,242h1v7h-1z" fill="#8e8a00" shape-rendering="crispEdges"/>
<polygon points="552.4,237.0 552.4,228.0 553.9,227.0 555.4,227.0 555.4,225.0 557.4,225.0 557.4,227.0 558.4,227.0 558.4,225.0 559.9,225.0 559.9,227.0 561.9,227.0 561.9,225.0 562.9,225.0 562.9,227.0 564.0,227.0 565.0,228.5 565.0,241.0 564.0,239.0 562.0,237.5 560.4,236.0 554.4,236.0 553.4,237.5" fill="#aca500" stroke="#827e00" stroke-width="1"/>
<rect x="553.4" y="232.5" width="10.6" height="1.2" fill="#9a9400"/>
<path d="M539,240h1v22h-1zM540,258h1v29h-1zM541,283h1v29h-1zM542,308h1v29h-1zM543,333h1v24h-1zM544,344h1v8h-1zM543,348h1v9h-1zM544,332h1v13h-1zM545,320h1v3h-1zM544,319h1v14h-1zM545,308h1v13h-1zM546,296h1v11h-1zM545,303h1v6h-1zM547,284h1v10h-1zM546,290h1v7h-1zM548,272h1v10h-1zM547,278h1v7h-1zM549,260h1v11h-1zM548,267h1v6h-1zM551,248h1v4h-1zM550,248h1v13h-1zM549,257h1v4h-1zM552,236h1v8h-1zM551,240h1v9h-1z" fill="#8e8a00" shape-rendering="crispEdges"/>
<polygon points="578.2,237.0 578.2,228.0 579.7,227.0 581.2,227.0 581.2,225.0 583.2,225.0 583.2,227.0 584.2,227.0 584.2,225.0 585.7,225.0 585.7,227.0 587.7,227.0 587.7,225.0 588.7,225.0 588.7,227.0 589.8,227.0 590.8,228.5 590.8,241.0 589.8,239.0 587.8,237.5 586.2,236.0 580.2,236.0 579.2,237.5" fill="#aca500" stroke="#827e00" stroke-width="1"/>
<rect x="579.2" y="232.5" width="10.6" height="1.2" fill="#9a9400"/>
<path d="M565,240h1v27h-1zM566,263h1v29h-1zM567,288h1v29h-1zM568,313h1v29h-1zM569,338h1v19h-1zM569,344h1v13h-1zM570,332h1v11h-1zM569,339h1v6h-1zM570,320h1v13h-1zM571,308h1v12h-1zM570,316h1v5h-1zM572,296h1v8h-1zM571,300h1v9h-1zM573,284h1v7h-1zM572,287h1v10h-1zM574,272h1v8h-1zM573,276h1v9h-1zM575,260h1v9h-1zM574,265h1v8h-1zM577,248h1v3h-1zM576,247h1v13h-1zM575,256h1v5h-1zM578,236h1v6h-1zM577,238h1v11h-1z" fill="#8e8a00" shape-rendering="crispEdges"/>
<polygon points="604.0,237.0 604.0,228.0 605.5,227.0 607.0,227.0 607.0,225.0 609.0,225.0 609.0,227.0 610.0,227.0 610.0,225.0 611.5,225.0 611.5,227.0 613.5,227.0 613.5,225.0 614.5,225.0 614.5,227.0 615.6,227.0 616.6,228.5 616.6,241.0 615.6,239.0 613.6,237.5 612.0,236.0 606.0,236.0 605.0,237.5" fill="#aca500" stroke="#827e00" stroke-width="1"/>
<rect x="605.0" y="232.5" width="10.6" height="1.2" fill="#9a9400"/>
<path d="M590,240h1v7h-1zM591,243h1v29h-1zM592,268h1v29h-1zM593,293h1v29h-1zM594,318h1v29h-1zM595,343h1v14h-1zM595,344h1v13h-1zM596,332h1v5h-1zM595,333h1v12h-1zM596,320h1v13h-1zM597,308h1v9h-1zM596,313h1v8h-1zM598,296h1v5h-1zM597,297h1v12h-1zM599,284h1v5h-1zM598,285h1v12h-1zM600,272h1v6h-1zM599,274h1v11h-1zM601,260h1v7h-1zM600,263h1v10h-1zM602,248h1v10h-1zM601,254h1v7h-1zM604,236h1v5h-1zM603,237h1v12h-1zM602,245h1v4h-1z" fill="#8e8a00" shape-rendering="crispEdges"/>
<polygon points="629.8,237.0 629.8,228.0 631.3,227.0 632.8,227.0 632.8,225.0 634.8,225.0 634.8,227.0 635.8,227.0 635.8,225.0 637.3,225.0 637.3,227.0 639.3,227.0 639.3,225.0 640.3,225.0 640.3,227.0 641.4,227.0 642.4,228.5 642.4,241.0 641.4,239.0 639.4,237.5 637.8,236.0 631.8,236.0 630.8,237.5" fill="#aca500" stroke="#827e00" stroke-width="1"/>
<rect x="630.8" y="232.5" width="10.6" height="1.2" fill="#9a9400"/>
<path d="M616,240h1v12h-1zM617,248h1v29h-1zM618,273h1v29h-1zM619,298h1v29h-1zM620,323h1v29h-1zM621,348h1v9h-1zM621,344h1v13h-1zM621,332h1v13h-1zM622,320h1v12h-1zM621,328h1v5h-1zM623,308h1v5h-1zM622,309h1v12h-1zM624,296h1v3h-1zM623,295h1v14h-1zM624,284h1v13h-1zM626,272h1v3h-1zM625,271h1v15h-1zM624,282h1v3h-1zM627,260h1v5h-1zM626,261h1v12h-1zM628,248h1v8h-1zM627,252h1v9h-1zM630,236h1v3h-1zM629,235h1v12h-1zM628,243h1v6h-1z" fill="#8e8a00" shape-rendering="crispEdges"/>
<polygon points="655.6,237.0 655.6,228.0 657.1,227.0 658.6,227.0 658.6,225.0 660.6,225.0 660.6,227.0 661.6,227.0 661.6,225.0 663.1,225.0 663.1,227.0 665.1,227.0 665.1,225.0 666.1,225.0 666.1,227.0 667.2,227.0 668.2,228.5 668.2,241.0 667.2,239.0 665.2,237.5 663.6,236.0 657.6,236.0 656.6,237.5" fill="#aca500" stroke="#827e00" stroke-width="1"/>
<rect x="656.6" y="232.5" width="10.6" height="1.2" fill="#9a9400"/>
<path d="M642,240h1v17h-1zM643,253h1v29h-1zM644,278h1v29h-1zM645,303h1v29h-1zM646,328h1v29h-1zM647,353h1v4h-1zM647,344h1v13h-1zM647,332h1v13h-1zM648,320h1v8h-1zM647,324h1v9h-1zM648,308h1v13h-1zM649,296h1v14h-1zM648,306h1v3h-1zM650,284h1v12h-1zM649,292h1v5h-1zM651,272h1v12h-1zM650,280h1v5h-1zM653,260h1v3h-1zM652,259h1v14h-1zM651,269h1v4h-1zM654,248h1v6h-1zM653,250h1v11h-1zM655,236h1v10h-1zM654,242h1v7h-1z" fill="#8e8a00" shape-rendering="crispEdges"/>
<polygon points="681.4,237.0 681.4,228.0 682.9,227.0 684.4,227.0 684.4,225.0 686.4,225.0 686.4,227.0 687.4,227.0 687.4,225.0 688.9,225.0 688.9,227.0 690.9,227.0 690.9,225.0 691.9,225.0 691.9,227.0 693.0,227.0 694.0,228.5 694.0,241.0 693.0,239.0 691.0,237.5 689.4,236.0 683.4,236.0 682.4,237.5" fill="#aca500" stroke="#827e00" stroke-width="1"/>
<rect x="682.4" y="232.5" width="10.6" height="1.2" fill="#9a9400"/>
<path d="M668,240h1v22h-1zM669,258h1v29h-1zM670,283h1v29h-1zM671,308h1v29h-1zM672,333h1v24h-1zM673,344h1v8h-1zM672,348h1v9h-1zM673,332h1v13h-1zM674,320h1v3h-1zM673,319h1v14h-1zM674,308h1v13h-1zM675,296h1v11h-1zM674,303h1v6h-1zM676,284h1v10h-1zM675,290h1v7h-1zM677,272h1v10h-1zM676,278h1v7h-1zM678,260h1v11h-1zM677,267h1v6h-1zM680,248h1v4h-1zM679,248h1v13h-1zM678,257h1v4h-1zM681,236h1v8h-1zM680,240h1v9h-1z" fill="#8e8a00" shape-rendering="crispEdges"/>
<polygon points="707.2,237.0 707.2,228.0 708.7,227.0 710.2,227.0 710.2,225.0 712.2,225.0 712.2,227.0 713.2,227.0 713.2,225.0 714.7,225.0 714.7,227.0 716.7,227.0 716.7,225.0 717.7,225.0 717.7,227.0 718.8,227.0 719.8,228.5 719.8,241.0 718.8,239.0 716.8,237.5 715.2,236.0 709.2,236.0 708.2,237.5" fill="#aca500" stroke="#827e00" stroke-width="1"/>
<rect x="708.2" y="232.5" width="10.6" height="1.2" fill="#9a9400"/>
<path d="M694,240h1v27h-1zM695,263h1v29h-1zM696,288h1v29h-1zM697,313h1v29h-1zM698,338h1v19h-1zM698,344h1v13h-1zM699,332h1v11h-1zM698,339h1v6h-1zM699,320h1v13h-1zM700,308h1v12h-1zM699,316h1v5h-1zM701,296h1v8h-1zM700,300h1v9h-1zM702,284h1v7h-1zM701,287h1v10h-1zM703,272h1v8h-1zM702,276h1v9h-1zM704,260h1v9h-1zM703,265h1v8h-1zM706,248h1v3h-1zM705,247h1v13h-1zM704,256h1v5h-1zM707,236h1v6h-1zM706,238h1v11h-1z" fill="#8e8a00" shape-rendering="crispEdges"/>
<path d="M719,240h1v11h-1zM720,247h1v49h-1zM721,292h1v24h-1z" fill="#8e8a00" shape-rendering="crispEdges"/>
<rect x="335" y="206" width="102.5" height="22" fill="#858100"/>
<rect x="335" y="209" width="102.5" height="4" fill="#9c9600"/>
<rect x="349.7" y="205.5" width="5.3" height="21.5" fill="#fff"/>
<rect x="358.75" y="205.5" width="1.25" height="21.5" fill="#fff"/>
<rect x="362.2" y="205.5" width="1.8" height="21.5" fill="#fff"/>
<rect x="366.25" y="205.5" width="0.8" height="21.5" fill="#fff"/>
<rect x="370.9" y="205.5" width="1" height="21.5" fill="#fff"/>
<rect x="374.4" y="205.5" width="0.9" height="21.5" fill="#fff"/>
<rect x="379" y="205.5" width="2.25" height="21.5" fill="#fff"/>
<rect x="386.9" y="205.5" width="1.5" height="21.5" fill="#fff"/>
<rect x="393.4" y="205.5" width="1.9" height="21.5" fill="#fff"/>
<rect x="398.4" y="205.5" width="1" height="21.5" fill="#fff"/>
<rect x="406.6" y="205.5" width="1.4" height="21.5" fill="#fff"/>
<rect x="416" y="205.5" width="2" height="21.5" fill="#fff"/>
<rect x="420" y="205.5" width="1.5" height="21.5" fill="#fff"/>
<rect x="427" y="205.5" width="2" height="21.5" fill="#fff"/>
<rect x="431" y="205.5" width="1.5" height="21.5" fill="#fff"/>
<polygon points="335.0,227.0 437.5,227.0 437.5,240.0 435.0,239.0 431.0,236.5 425.0,236.5 421.0,239.0 418.0,243.0 414.0,245.0 410.0,240.0 407.0,236.5 400.0,236.5 396.0,239.0 392.0,243.0 388.0,244.0 384.0,240.0 381.0,236.5 375.0,236.5 371.0,239.0 366.0,243.0 361.0,244.0 357.0,243.0 355.0,240.0 350.0,238.0 342.0,238.0 335.0,239.0" fill="#aaa300" stroke="#8a8600" stroke-width="1"/>
<polygon points="357.0,237.0 360.5,237.0 363.3,336.0 362.3,336.0" fill="#9a9408"/>
<path d="M364,237h1v63h-1zM364,300h1v12h-1zM363,308h1v22h-1z" fill="#8e8a00" shape-rendering="crispEdges"/>
<polygon points="366.0,237.0 369.0,237.0 368.1,267.0 367.1,267.0" fill="#9a9408"/>
<polygon points="369.0,237.0 372.0,237.0 370.9,246.0 369.9,246.0" fill="#9a9408"/>
<rect x="361.2" y="238" width="1.6" height="60" fill="#fff"/>
<path d="M362,250h1v50h-1z" fill="#8e8a00" shape-rendering="crispEdges"/>
<polygon points="383.0,237.0 389.4,237.0 389.5,336.0 388.5,336.0" fill="#9a9408"/>
<polygon points="390.4,237.0 394.0,237.0 392.1,255.0 391.1,255.0" fill="#9a9408"/>
<polygon points="394.5,237.0 397.0,237.0 396.0,249.0 395.0,249.0" fill="#9a9408"/>
<polygon points="407.0,237.0 415.5,237.0 415.0,289.0 414.0,289.0" fill="#9a9408"/>
<polygon points="416.5,237.0 419.5,237.0 418.1,266.0 417.1,266.0" fill="#9a9408"/>
<polygon points="434.0,237.0 438.0,237.0 438.1,262.0 437.1,262.0" fill="#9a9408"/>
</svg>
<svg class="a" style="left:0;top:0" width="800" height="600" viewBox="0 0 800 600" shape-rendering="crispEdges">
<path d="M335.5,38V433" stroke="#000" stroke-width="1.3" stroke-dasharray="18 6" fill="none" shape-rendering="auto"/>
<path d="M433.5,38V433" stroke="#000" stroke-width="1.3" stroke-dasharray="9 6 3 6" fill="none" shape-rendering="auto"/>
</svg>
<svg class="a" style="left:0;top:0" width="800" height="600" viewBox="0 0 800 600">
<path d="M335.5,312.5 L342.5,318.5 L337.5,318.5 L337.5,328.5 L333.5,328.5 L333.5,318.5 L328.5,318.5 Z" fill="#fff" stroke="#000" stroke-width="1.3"/>
<path d="M335.5,320V326" stroke="#000" stroke-width="1.2"/>
<path d="M433.5,231.5 L440.5,225.5 L435.5,225.5 L435.5,216.5 L431.5,216.5 L431.5,225.5 L426.5,225.5 Z" fill="#fff" stroke="#000" stroke-width="1.3"/>
<path d="M433.5,219V223" stroke="#000" stroke-width="1.2"/>
<path d="M335.5,434 L339.5,441.5 L331.5,441.5 Z" fill="#b0a800" stroke="#b0a800" stroke-width="1"/>
<path d="M791.5,223.5 L798,219.5 L798,227.5 Z" fill="#b0a800" stroke="#b0a800" stroke-width="1"/>
<path d="M789,223.5H792" stroke="#b0a800" stroke-width="1"/>
<path d="M7,235H16.5V237H9V238H7Z" fill="#8a8500"/>
<text x="4.5" y="232.5" style="font-family:'Liberation Sans',sans-serif;font-size:9.5px" fill="#6e6a20">C1</text>
</svg>
<!-- measure -->
<div class="t" style="left:4px;top:445px;font-weight:bold;font-size:12.8px">Measure</div>
<div class="t ms" style="left:5px;top:461px">value</div>
<div class="t ms" style="left:5px;top:478px">status</div>
<div class="t r ms" style="right:620.5px;top:445px">P1:freq(C4)</div>
<div class="t r ms" style="right:532.5px;top:445px">P2:mean(C1)</div>
<div class="t r ms" style="right:444.5px;top:445px">P3:rms(F1)</div>
<div class="t r ms" style="right:356px;top:445px">P4:hrms(F1)</div>
<div class="t r ms" style="right:268px;top:445px">P5:rise(C2)</div>
<div class="t r ms" style="right:181px;top:445px">P6:fall(C2)</div>
<div class="t r ms" style="right:92.5px;top:445px">P7:width(F1)</div>
<div class="t r ms" style="right:5.5px;top:445px">P8:pop@x(F1)</div>
<div class="t r ms" style="right:620px;top:461px">65.27 kHz</div>
<div class="t r ms" style="right:532.5px;top:461px">-2.12 V</div>
<div class="t r ms" style="right:444.5px;top:461px">4.256 V</div>
<svg class="a" style="left:0;top:0" width="800" height="600" viewBox="0 0 800 600">
<path d="M167,485.5H170.5V480.5H174V485.5H177" stroke="#111" stroke-width="1.6" fill="none"/>
<path d="M167,478L170,481M177,478L174,481M167,488L170,485M177,488L174,485" stroke="#999" stroke-width="0.8" fill="none"/>
<path d="M256,483.5L258.3,486.8L264.5,480" stroke="#3a3a3a" stroke-width="2.6" fill="none" stroke-linecap="round" stroke-linejoin="round"/>
<path d="M344,483.5L346.3,486.8L352.5,480" stroke="#3a3a3a" stroke-width="2.6" fill="none" stroke-linecap="round" stroke-linejoin="round"/>
<path d="M786,478.5H789L792.5,486.5V487.5H783V486.5Z" fill="#b4b4b4" stroke="#505050" stroke-width="1" stroke-dasharray="1.5 0.8"/>
<path d="M783,487.5H793" stroke="#333" stroke-width="1"/>
<path d="M787.5,480V484.5M787.5,485.5V486.5" stroke="#000" stroke-width="1.2"/>
</svg>
<!-- C1 box -->
<div id="c1"></div>
<div class="t" style="left:9px;top:495px;font-size:12.5px;color:#111">C1</div>
<div class="badge" style="left:41px;top:497px;width:24px;height:11px;color:#b4ac00">BwL</div>
<div class="badge" style="left:66px;top:497px;width:34px;height:11px;color:#b4ac00">DC1M</div>
<div class="t r c1t" style="right:700px;top:511px">5.00 V/div</div>
<div class="t r c1t" style="right:700px;top:525px">0.00 V offset</div>
<div class="t r c1t" style="right:700px;top:539px">410 mV</div>
<div class="t r c1t" style="right:700px;top:553px">-7.68 V</div>
<div class="t r c1t" style="right:700px;top:567px">-8.09 V</div>
<svg class="a" style="left:0;top:0" width="110" height="600" viewBox="0 0 110 600">
<path d="M11,543V551M8.5,548.5L11,551.5L13.5,548.5" stroke="#111" stroke-width="1.2" fill="none"/>
<path d="M11,566V557.5M8.5,560L11,557L13.5,560" stroke="#111" stroke-width="1.2" fill="none"/>
<path d="M11.5,569.5L8.5,577.5H14.5Z" stroke="#111" stroke-width="1.2" fill="none"/>
<path d="M15,572L17.5,578M20,572L16.5,581" stroke="#111" stroke-width="1.1" fill="none"/>
</svg>
<div class="t" style="left:9px;top:581px;font-size:14.6px;line-height:16px;color:#4a4a4a;letter-spacing:0.6px;font-weight:bold">LeCroy</div>
<div class="a" style="left:10px;top:597px;width:43px;height:2px;background:#444"></div>
<!-- timebase -->
<div class="panel" style="left:583px;width:112px">
<div class="hdr" style="width:106px"></div>
<div class="t" style="left:2.5px;top:1px;color:#000">Timebase</div>
<div class="t r" style="right:1px;top:1px;color:#000">-44 ms</div>
<div class="t r" style="right:1px;top:16.5px">50.0 ms/div</div>
<div class="t" style="left:2.5px;top:30.5px">500 kS</div>
<div class="t r" style="right:1px;top:30.5px">1.0 MS/s</div>
</div>
<div class="panel" style="left:698px;width:97px">
<div class="hdr" style="width:91px"></div>
<div class="t" style="left:2.5px;top:1px;color:#000">Trigger</div>
<div class="badge" style="left:56px;top:3px;width:18px;height:11px;color:#fff">C1</div>
<div class="badge" style="left:75px;top:3px;width:19px;height:11px;color:#fff">DC</div>
<div class="t" style="left:2px;top:16.5px">Stop</div>
<div class="t r" style="right:1px;top:16.5px">1.25 V</div>
<div class="t" style="left:2px;top:30.5px">Edge</div>
<div class="t r" style="right:1px;top:30.5px">Positive</div>
</div>
<div class="t ms" style="left:588px;top:541px">X1=</div>
<div class="t r ms" style="right:125px;top:541px">63.165 ms</div>
<div class="t r ms" style="right:85px;top:541px">ΔX=</div>
<div class="t r ms" style="right:9.5px;top:541px">-63.182 ms</div>
<div class="t ms" style="left:588px;top:557px">X2=</div>
<div class="t r ms" style="right:125px;top:557px">-17 μs</div>
<div class="t r ms" style="right:85px;top:557px">1/ΔX=</div>
<div class="t r ms" style="right:9.5px;top:557px">-15.8273 Hz</div>
<div class="t r ms" style="right:15.5px;top:585px">2/19/2008 11:06:56 AM</div>
</body></html>
